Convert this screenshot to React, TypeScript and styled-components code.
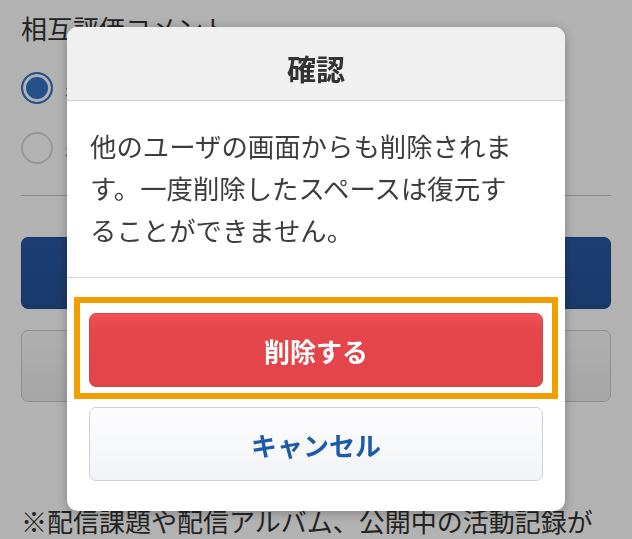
import React from "react";
import styled, { createGlobalStyle } from "styled-components";

const Global = createGlobalStyle`
  html, body { margin: 0; padding: 0; background: #ffffff; }
  body { font-family: "Noto Sans CJK JP", "Noto Sans", sans-serif; }
  * { box-sizing: border-box; }
`;

const Page = styled.div`
  width: 632px;
  height: 539px;
  overflow: hidden;
  padding: 10px 21px 0;
  display: flex;
  flex-direction: column;
  color: #333;
`;

const SectionTitle = styled.div`
  font-size: 26px;
  line-height: 36px;
  height: 36px;
`;

const RadioList = styled.div`
  margin-top: 12px;
  display: flex;
  flex-direction: column;
`;

const RadioRow = styled.div`
  height: 60px;
  display: flex;
  align-items: center;
  gap: 12px;
  font-size: 26px;
`;

const RadioCircle = styled.span<{ $checked?: boolean }>`
  width: 32px;
  height: 32px;
  border-radius: 50%;
  flex: none;
  border: 2px solid ${(p) => (p.$checked ? "#3474c6" : "#d8d8d8")};
  background: ${(p) => (p.$checked ? "#3474c6" : "#fff")};
  box-shadow: ${(p) => (p.$checked ? "inset 0 0 0 3px #fff" : "none")};
`;

const Divider = styled.hr`
  margin: 17px 0 0;
  border: 0;
  border-top: 1px solid #c8c8c8;
`;

const PageButton = styled.div<{ $primary?: boolean }>`
  margin-top: ${(p) => (p.$primary ? "41px" : "21px")};
  height: ${(p) => (p.$primary ? "74px" : "73px")};
  border-radius: 7px;
  border: 1px solid ${(p) => (p.$primary ? "#22488a" : "#cfcfcf")};
  background: ${(p) =>
    p.$primary
      ? "linear-gradient(#2a5aa6, #26529a)"
      : "linear-gradient(#fbfbfb, #eeeeee)"};
`;

const Note = styled.div`
  margin-top: 101px;
  font-size: 26px;
  line-height: 36px;
  white-space: nowrap;
`;

const Overlay = styled.div`
  position: fixed;
  inset: 0;
  background: rgba(0, 0, 0, 0.3);
  display: flex;
  justify-content: center;
  align-items: flex-start;
  padding-top: 27px;
`;

const Modal = styled.div`
  width: 498px;
  background: #fff;
  border-radius: 11px;
  overflow: hidden;
  box-shadow: 0 2px 12px rgba(0, 0, 0, 0.28);
  display: flex;
  flex-direction: column;
`;

const ModalHeader = styled.div`
  height: 74px;
  background: #f0f0f0;
  border-bottom: 1px solid #d2d2d2;
  display: flex;
  justify-content: center;
  padding-top: 22px;
  font-size: 29px;
  line-height: 38px;
  font-weight: 700;
  color: #333;
`;

const ModalBody = styled.div`
  padding: 24px 40px 26px 23px;
  font-size: 26.4px;
  line-height: 42px;
  color: #3d3d3d;
  border-bottom: 1px solid #d6d6d6;
`;

const ModalFooter = styled.div`
  padding: 35px 22px 30px;
  display: flex;
  flex-direction: column;
  gap: 20px;
`;

const Highlighted = styled.div`
  position: relative;
`;

const HighlightFrame = styled.div`
  position: absolute;
  top: -16px;
  left: -15px;
  right: -15px;
  bottom: -12px;
  border: 6px solid #f29e00;
  pointer-events: none;
`;

const DialogButton = styled.button<{ $danger?: boolean }>`
  width: 100%;
  height: 74px;
  border-radius: 7px;
  font-family: inherit;
  font-size: 26px;
  font-weight: 700;
  display: flex;
  align-items: center;
  justify-content: center;
  padding: 0;
  border: 1px solid ${(p) => (p.$danger ? "#d4434a" : "#d0d0d0")};
  color: ${(p) => (p.$danger ? "#ffffff" : "#1f5aa8")};
  background: ${(p) =>
    p.$danger
      ? "linear-gradient(#f35355, #e4464a 20%, #e2444a)"
      : "linear-gradient(#fdfdfe, #f1f3f6)"};
`;

export default function App() {
  return (
    <>
      <Global />
      <Page>
        <SectionTitle>相互評価コメント</SectionTitle>
        <RadioList>
          <RadioRow>
            <RadioCircle $checked />
            表示する
          </RadioRow>
          <RadioRow>
            <RadioCircle />
            表示しない
          </RadioRow>
        </RadioList>
        <Divider />
        <PageButton $primary />
        <PageButton />
        <Note>※配信課題や配信アルバム、公開中の活動記録が</Note>
      </Page>
      <Overlay>
        <Modal>
          <ModalHeader>確認</ModalHeader>
          <ModalBody>
            他のユーザの画面からも削除されます。一度削除したスペースは復元することができません。
          </ModalBody>
          <ModalFooter>
            <Highlighted>
              <DialogButton $danger>削除する</DialogButton>
              <HighlightFrame />
            </Highlighted>
            <DialogButton>キャンセル</DialogButton>
          </ModalFooter>
        </Modal>
      </Overlay>
    </>
  );
}
